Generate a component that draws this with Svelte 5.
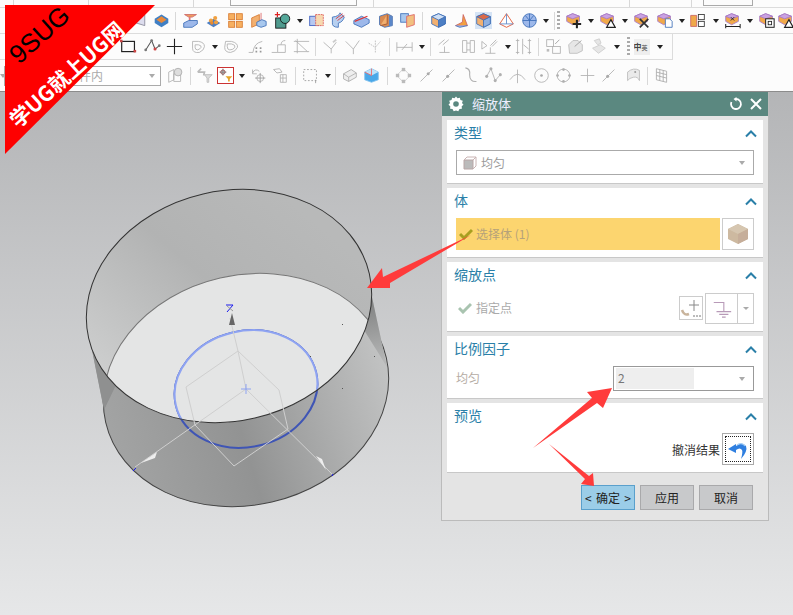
<script>
	// shared icon bodies, drawn on a 20x20 box
	const cube = (top, left, right, line = '#3d6fb8') =>
		`<path d="M10 2 18 5.5V14L10 18 2 14V5.5Z" fill="${left}" stroke="${line}"/><path d="M10 9.5 18 5.5V14L10 18Z" fill="${right}" stroke="${line}"/><path d="M2 5.5 10 2 18 5.5 10 9.5Z" fill="${top}" stroke="${line}"/>`;
	const purple = (extra) =>
		`<path d="M9 2 17 5V11L9 15 2 11V5Z" fill="#f0a94a" stroke="#a678c8"/><path d="M2 5 9 2 17 5 9 8Z" fill="#c9a2e2" stroke="#a678c8"/>${extra}`;
	const gray = 'fill="none" stroke="#b0b0b0"';
	const icons = {
		cone: `<path d="M2 9 15 3V16L2 12Z" fill="#dde" stroke="#889"/>`,
		disc: `<path d="M10 3 18 8V13L10 18 2 13V8Z" fill="#3f7fc4"/><path d="M10 5 16 9 10 13 4 9Z" fill="#e88a3a"/>`,
		tee: `<path d="M3 3H17L12 6H8Z" fill="#f0a060" stroke="#c66"/><path d="M9 6V12" stroke="#d77" stroke-width="2"/><path d="M2 13 8 10H18V14L12 18H2Z" fill="#9db8ea" stroke="#3d6fb8"/>`,
		bumps: `<path d="M2 13 10 8 18 13 10 18Z" fill="#4d7fc4"/><circle cx="7" cy="10" r="2.4" fill="#f0a040"/><circle cx="12" cy="7" r="2.4" fill="#f0a040"/><circle cx="13" cy="12" r="2.4" fill="#f0a040"/><circle cx="8" cy="13" r="2" fill="#e88a30"/>`,
		cubes: `<rect x="2" y="2" width="7" height="7" fill="#f7b060" stroke="#d87a30"/><rect x="11" y="2" width="7" height="7" fill="#f7b060" stroke="#d87a30"/><rect x="2" y="11" width="7" height="7" fill="#f7b060" stroke="#d87a30"/><rect x="11" y="11" width="7" height="7" fill="#f7b060" stroke="#d87a30"/>`,
		cross: `<path d="M2 7 11 3V14L2 18Z" fill="#f2b070" stroke="#d87a30"/><path d="M13 1V12" stroke="#d66"/><path d="M8 12 14 9 19 11V16L13 18 8 16Z" fill="#a8c8ee" stroke="#3d6fb8"/>`,
		teal: `<rect x="2" y="7" width="12" height="12" fill="#4f9a8e" stroke="#111"/><circle cx="13" cy="8" r="5.5" fill="#54a89a" stroke="#111"/><path d="M1 3H7M4 0V6" stroke="#d22" stroke-width="1.4"/>`,
		box: `<rect x="2" y="5" width="11" height="11" fill="#b7c8f0" stroke="#3d5fc0"/><rect x="9" y="3" width="9" height="13" fill="#f7d9b0" stroke="#d55" stroke-dasharray="2 1"/>`,
		curve: `<path d="M4 6Q12 5 13 1L18 6Q16 12 11 13L11 18Q3 18 4 12Z" fill="#b7d0f0" stroke="#3d6fb8"/><path d="M8 8 16 2M10 10 18 4" stroke="#d33"/>`,
		wedge: `<path d="M1 10 10 5 19 9V13L10 18 1 14Z" fill="#9db8ea" stroke="#3d6fb8"/><path d="M2 11 17 5" stroke="#d33" stroke-width="1.4"/>`,
		brown: `<path d="M3 5 12 2 18 5V16L9 18 3 15Z" fill="#d98a50" stroke="#3d6fb8"/><path d="M12 3V14L4 16" stroke="#a0522d" fill="#f2b070"/><path d="M14 4 18 5V16L14 17Z" fill="#5b87c9"/>`,
		split: `<rect x="2" y="2" width="9" height="10" fill="#a8c8ee" stroke="#3d6fb8"/><path d="M9 5 18 3V15L9 18Z" fill="#f2c080" stroke="#d66"/>`,
		bluebox: cube('#cfe0f6', '#f2b070', '#4d7fc4'),
		tri: `<path d="M12 3 17 16H3L11 12Z" fill="#f2a040" stroke="#c66"/><path d="M3 16 8 18 17 16" stroke="#3d6fb8" fill="#9db8ea"/>`,
		redbox: `<rect x="0" y="0" width="20" height="20" fill="#d6e4f5"/>` + cube('#d96a4a', '#f2b070', '#8fb0e0'),
		pyr: `<path d="M10 2 18 14 10 18 2 14Z" fill="#fff" stroke="#e0502a"/><path d="M10 2V14L2 14M10 14 18 14" stroke="#5b87c9" fill="none"/>`,
		sphere: `<circle cx="10" cy="10" r="8" fill="#9db8ea" stroke="#3d6fb8"/><path d="M2 10H18M10 2V18M5 4 10 10 15 4" stroke="#3d6fb8" fill="none"/>`,
		pplus: purple(`<path d="M14 9V19M9 14H19" stroke="#222" stroke-width="2.4"/>`),
		ptri: purple(`<path d="M14 9 19 18H9Z" fill="#fff" stroke="#222" stroke-width="1.4"/>`),
		px: purple(`<path d="M8 8 18 18M18 8 8 18" stroke="#333" stroke-width="2"/>`),
		pdoc: purple(`<path d="M11 8H16L19 11V18H11Z" fill="#fff" stroke="#3d6fb8"/>`),
		pseg: `<path d="M2 4H9V17H2Z" fill="#f0a94a" stroke="#c66"/><rect x="11" y="3" width="7" height="6" fill="#fff" stroke="#333"/><rect x="11" y="11" width="7" height="6" fill="#fff" stroke="#333"/>`,
		pdim: purple(`<path d="M2 17H19M2 14V19M19 14V19" stroke="#222" stroke-width="1.2"/><path d="M8 6 12 10M12 6 8 10" stroke="#222"/>`),
		pframe: purple(`<rect x="9" y="8" width="10" height="10" fill="#fff" stroke="#222" stroke-width="1.2"/><rect x="12" y="11" width="4" height="4" fill="none" stroke="#222"/>`),
		rect: `<rect x="2" y="4" width="15" height="12" fill="none" stroke="#222" stroke-width="1.4"/><rect x="0" y="2" width="3" height="3" fill="#c44"/><rect x="16" y="14" width="3" height="3" fill="#c44"/>`,
		poly: `<path d="M2 14 9 3 13 13 18 9" fill="none" stroke="#555" stroke-width="1.2"/><circle cx="2" cy="14" r="1.6" fill="#777"/><circle cx="9" cy="3" r="1.6" fill="#777"/><circle cx="13" cy="13" r="1.8" fill="#c44"/><circle cx="18" cy="9" r="1.6" fill="#777"/>`,
		plus: `<path d="M10 1V19M1 10H19" stroke="#222" stroke-width="1.3"/>`,
		heart: `<path d="M3 4H10Q17 5 17 10 17 14 11 17 3 18 3 12Z M6 8H10Q14 9 13 11 12 13 9 14 6 14 6 11Z" ${gray}/>`,
		heart2: `<path d="M3 4H10Q18 6 17 11 15 16 9 17 2 17 2 11Z M5 7H10Q15 8 14 11 12 14 8 14 5 14 5 10Z" ${gray}/>`,
		fillet: `<path d="M2 17H7Q8 6 18 4" ${gray}/><path d="M10 12H12M15 12H17M10 16H12M15 16H17" stroke="#999" stroke-width="2"/>`,
		offset: `<path d="M2 17H9M9 8H18V17H9Z M13 8Q13 3 18 3" ${gray}/>`,
		trim: `<path d="M1 4H19M5 1V18M1 16H19M3 3 17 16" ${gray}/>`,
		dot1: `<path d="M3 5 12 13 18 5M12 13V18" ${gray}/><path d="M14 5 18 2" stroke="#ccc" stroke-width="2"/>`,
		dot2: `<path d="M2 4 11 13 18 3M11 13V19" ${gray}/>`,
		dot3: `<path d="M3 6 11 11 17 4M11 3V18" fill="none" stroke="#bbb" stroke-dasharray="2 1"/>`,
		dim: `<path d="M1 5V16M19 5V16M1 11H19M7 14 13 7" ${gray}/>`,
		dim2: `<path d="M3 8 10 2M8 8 15 2M4 17H16M10 10V17" ${gray}/>`,
		frame: `<path d="M3 3V17H8V3ZM12 3V17H17V3ZM8 6H12M8 14H12" ${gray}/>`,
		ang: `<path d="M1 4 7 9 1 13ZM11 9 18 2M13 10 19 4M11 11V18M5 18H17" ${gray}/>`,
		bars: `<path d="M3 1V19M17 1V19M9 1V19M1 3H5M1 17H5M15 3H19M15 17H19M10 8 16 13" ${gray}/>`,
		grid: `<rect x="2" y="2" width="8" height="8" ${gray}/><rect x="9" y="10" width="9" height="8" ${gray}/><path d="M12 7 17 2" stroke="#999"/><rect x="2" y="13" width="3" height="3" fill="#bbb"/>`,
		tool: `<path d="M2 8 7 3H13L18 8V15L12 18H3Z" fill="#e6e6e6" stroke="#bbb"/><path d="M9 10 17 3" stroke="#999"/>`,
		tool2: `<path d="M5 3 11 1 13 6 9 8ZM3 12 12 8 18 12 10 18Z" fill="#e6e6e6" stroke="#ccc"/>`,
		spheres: `<path d="M2 6 8 3V15L2 18ZM8 8H16V17H8Z" ${gray}/><circle cx="13" cy="6" r="4.5" fill="#ddd" stroke="#aaa"/>`,
		funnel: `<path d="M2 6 6 2M2 6H10L9 10" fill="none" stroke="#bbb" stroke-width="2"/><path d="M10 9H19L15 13V18H13V13Z" fill="#ddd" stroke="#bbb"/>`,
		snap: `<rect x="0" y="0" width="20" height="20" fill="#fff"/><path d="M7 2V10M3 6H11" stroke="#666"/><circle cx="7" cy="6" r="2.5" fill="none" stroke="#844"/><path d="M10 11H18L15 14V17H13V14Z" fill="#e6a52a"/>`,
		rot: `<path d="M3 7Q6 1 11 5" ${gray}/><path d="M3 3V8H8" ${gray}/><circle cx="12" cy="13" r="4" ${gray}/><path d="M12 7V19M6 13H18" stroke="#999"/>`,
		bolts: `<path d="M3 3 10 2 13 6 7 7ZM11 9H18V18H11Z M14 9V18M11 13H18" ${gray}/>`,
		dash: `<rect x="2" y="3" width="15" height="13" fill="none" stroke="#999" stroke-dasharray="2 2"/><path d="M16 15V19" stroke="#999"/>`,
		sheet: `<path d="M3 8 12 3 18 7V12L9 17 3 14Z" fill="#eee" stroke="#aaa"/><path d="M3 8 9 12V17M9 12 18 7" ${gray}/>`,
		solid: `<path d="M2 6 10 2 18 6V15L10 18 2 15Z" fill="#4aa8e8" stroke="#7fc0ee"/><path d="M2 6 10 10 18 6 10 2Z" fill="#bfe2f8"/><path d="M10 2V10L2 6" fill="none" stroke="#e66"/>`,
		pts: `<path d="M10 2 18 10 10 18 2 10Z" fill="none" stroke="#ccc"/><g fill="#bbb"><rect x="8" y="1" width="4" height="4"/><rect x="8" y="15" width="4" height="4"/><rect x="1" y="8" width="4" height="4"/><rect x="15" y="8" width="4" height="4"/></g>`,
		line1: `<path d="M3 17 17 3" stroke="#b0b0b0"/><circle cx="12" cy="8" r="1.8" fill="#aaa"/>`,
		line2: `<path d="M3 17 17 3" stroke="#b0b0b0"/><circle cx="9" cy="11" r="1.8" fill="#aaa"/>`,
		scurve: `<path d="M4 1Q10 2 9 9 9 18 17 17" ${gray} stroke-width="1.3"/>`,
		polyg: `<path d="M2 11 7 2 12 16 18 9" ${gray}/><g fill="#b0b0b0"><circle cx="2" cy="11" r="1.8"/><circle cx="7" cy="2" r="1.8"/><circle cx="12" cy="16" r="1.8"/><circle cx="18" cy="9" r="1.8"/></g>`,
		arc: `<path d="M1 15Q10 2 19 15M10 3V19" ${gray}/>`,
		ring: `<circle cx="10" cy="10" r="8" ${gray}/><circle cx="10" cy="10" r="1.6" fill="#aaa"/>`,
		ring2: `<circle cx="10" cy="10" r="7.5" ${gray}/><g fill="#b0b0b0"><circle cx="10" cy="3" r="1.6"/><circle cx="10" cy="17" r="1.6"/><circle cx="3" cy="10" r="1.6"/><circle cx="17" cy="10" r="1.6"/></g>`,
		thin: `<path d="M10 2V18M2 10H18" stroke="#b0b0b0"/>`,
		patch: `<path d="M3 6Q10 0 17 4V16Q15 11 10 12 5 13 3 16Z" fill="#eaeaea" stroke="#bbb"/><circle cx="12" cy="6" r="1.2" fill="#999"/>`,
		mesh: `<path d="M4 2 16 5V18L4 15ZM8 3V16M12 4V17M4 6 16 9M4 10 16 13" fill="none" stroke="#aaa"/>`
	};

	const I = (x, k) => ({ t: 'i', x, k });
	const A = (x) => ({ t: 'a', x });
	const S = (x) => ({ t: 's', x });
	const G = (x) => ({ t: 'g', x });
	const widths = { i: 17, a: 7, s: 1, g: 3 };

	// place items by centre x: the margin is derived from the previous item's end
	function place(items, start = 0) {
		let end = start;
		return items.map((it) => {
			const w = widths[it.t];
			const gap = it.x - w / 2 - end;
			end = it.x + w / 2;
			return { ...it, gap };
		});
	}

	const row1 = place([
		I(140, 'cone'), I(161, 'disc'), S(175), I(190, 'tee'), I(213, 'bumps'), I(235, 'cubes'), I(258, 'cross'),
		I(282, 'teal'), A(300), I(317, 'box'), I(338, 'curve'), I(362, 'wedge'), I(386, 'brown'), I(408, 'split'),
		S(423), I(439, 'bluebox'), I(462, 'tri'), I(484, 'redbox'), I(507, 'pyr'), I(530, 'sphere'), A(547), S(556),
		G(560), I(575, 'pplus'), A(593), I(610, 'ptri'), A(628), I(645, 'px'), I(668, 'pdoc'), A(686), I(702, 'pseg'),
		A(721), I(738, 'pdim'), A(756), I(773, 'pframe'), I(792, 'ptri')
	]);
	const row2 = place([
		I(128, 'rect'), I(152, 'poly'), I(174, 'plus'), I(198, 'heart'), A(215), I(232, 'heart2'), I(256, 'fillet'),
		I(279, 'offset'), I(302, 'trim'), S(316), I(330, 'dot1'), I(353, 'dot2'), I(375, 'dot3'), S(390), I(405, 'dim'),
		A(423), S(432), I(446, 'dim2'), I(470, 'frame'), I(491, 'ang'), A(510), I(526, 'bars'), S(541), I(556, 'grid'),
		I(578, 'tool'), I(601, 'tool2'), A(620), G(632)
	]);
	const row3 = place([
		I(176, 'spheres'), S(191), I(205, 'funnel'), I(226, 'snap'), A(243), I(260, 'rot'), I(281, 'bolts'), S(297),
		I(312, 'dash'), A(330), S(338), I(352, 'sheet'), I(374, 'solid'), S(390), I(406, 'pts'), I(429, 'line1'),
		I(451, 'line2'), I(473, 'scurve'), I(496, 'polyg'), I(520, 'arc'), I(544, 'ring'), I(566, 'ring2'),
		I(590, 'thin'), I(611, 'line2'), I(636, 'patch'), S(650), I(664, 'mesh')
	], 162);
	const strip = [13, 88, 193, 373, 629, 691];

	const topEllipse = { cx: 229, cy: 306, rx: 144, ry: 115 };
	const botEllipse = { cx: 246, cy: 390, rx: 144, ry: 115 };
	const tilt = -13;
</script>

{#snippet tools(items)}
	{#each items as it}
		{#if it.t === 'i'}
			<svg class="ico" class:active={it.k === 'snap'} style="margin-left:{it.gap}px" viewBox="0 0 20 20">{@html icons[it.k]}</svg>
		{:else if it.t === 'a'}
			<i class="drop" style="margin-left:{it.gap}px"></i>
		{:else if it.t === 's'}
			<i class="sep" style="margin-left:{it.gap}px"></i>
		{:else}
			<i class="grip" style="margin-left:{it.gap}px"></i>
		{/if}
	{/each}
{/snippet}

{#snippet head(title)}
	<header class="sec-head">
		<span>{title}</span>
		<svg class="chev" viewBox="0 0 12 8"><path d="M1 7 6 2 11 7" fill="none" stroke="#2a7fa8" stroke-width="2" /></svg>
	</header>
{/snippet}

<div class="app">
	<div class="toolbar">
		<div class="strip">
			{#each strip as x}
				<i class="tick" style="left:{x}px"></i>
			{/each}
			<i class="strip-box"></i>
			<i class="strip-box second"></i>
		</div>
		<div class="row r1">{@render tools(row1)}</div>
		<div class="row r2">
			{@render tools(row2)}
			<span class="lang">中<small>英</small></span>
			<i class="drop lang-drop"></i>
		</div>
		<div class="row r3">
			<i class="drop gray first"></i>
			<div class="filter"><span>在工作部件内</span><i class="drop gray"></i></div>
			{@render tools(row3)}
		</div>
	</div>

	<div class="viewport">
		<svg class="scene" viewBox="0 92 793 523">
			<defs>
				<linearGradient id="wall" gradientUnits="userSpaceOnUse" x1="95" y1="350" x2="300" y2="200">
					<stop offset="0" stop-color="#cdcece" />
					<stop offset="0.55" stop-color="#b2b3b3" />
					<stop offset="1" stop-color="#b8b9b9" />
				</linearGradient>
				<linearGradient id="outer" gradientUnits="userSpaceOnUse" x1="100" y1="420" x2="390" y2="400">
					<stop offset="0" stop-color="#a3a4a4" />
					<stop offset="0.45" stop-color="#929393" />
					<stop offset="1" stop-color="#c2c3c3" />
				</linearGradient>
				<linearGradient id="strip-r" gradientUnits="userSpaceOnUse" x1="372" y1="300" x2="382" y2="360">
					<stop offset="0" stop-color="#808181" />
					<stop offset="1" stop-color="#b4b5b5" />
				</linearGradient>
				<clipPath id="inTop">
					<ellipse cx={topEllipse.cx} cy={topEllipse.cy} rx={topEllipse.rx} ry={topEllipse.ry} transform="rotate({tilt} {topEllipse.cx} {topEllipse.cy})" />
				</clipPath>
			</defs>

			<path d="M92 350 104 410 387 367 372 297Z" fill="url(#outer)" />
			<ellipse class="bot" cx={botEllipse.cx} cy={botEllipse.cy} rx={botEllipse.rx} ry={botEllipse.ry} transform="rotate({tilt} {botEllipse.cx} {botEllipse.cy})" fill="url(#outer)" stroke="#444" />
			<path d="M92 350 104 410 116 385Z" fill="#8f9090" />
			<path d="M372 297 387 367 364 330Z" fill="url(#strip-r)" />
			<ellipse cx={topEllipse.cx} cy={topEllipse.cy} rx={topEllipse.rx} ry={topEllipse.ry} transform="rotate({tilt} {topEllipse.cx} {topEllipse.cy})" fill="url(#wall)" />

			<g clip-path="url(#inTop)">
				<ellipse cx={botEllipse.cx} cy={botEllipse.cy} rx={botEllipse.rx} ry={botEllipse.ry} transform="rotate({tilt} {botEllipse.cx} {botEllipse.cy})" fill="#e4e5e5" stroke="#777" />
			</g>

			<ellipse cx="246" cy="389" rx="72" ry="58" transform="rotate({tilt} 246 389)" fill="none" stroke="#3f55b5" stroke-width="2" />
			<g clip-path="url(#inTop)">
				<ellipse cx="246" cy="389" rx="72" ry="58" transform="rotate({tilt} 246 389)" fill="#e4e5e5" stroke="#8ea3f2" stroke-width="2" />
			</g>

			<ellipse cx={topEllipse.cx} cy={topEllipse.cy} rx={topEllipse.rx} ry={topEllipse.ry} transform="rotate({tilt} {topEllipse.cx} {topEllipse.cy})" fill="none" stroke="#333" />

			<g fill="none" stroke="#cfcfcf">
				<path d="M238 351 186 387 195 425 234 466 288 429 279 390 238 351" />
				<path d="M246 389 238 351 230 318M246 389 135 467M246 389 332 474" />
			</g>
			<path d="M241 389H251M246 384V394" stroke="#8ea3f2" />
			<path d="M232 313 229 325 235 325Z" fill="#666" />
			<path d="M141 463 157 452 155 458Z" fill="#eee" />
			<path d="M326 470 316 456 322 459Z" fill="#eee" />
			<path d="M226 305H233L227 312" fill="none" stroke="#1a1aee" />
			<path d="M227 306 233 311" stroke="#999" />
			<path d="M133 471 136 468" stroke="#1a1aee" />
			<path d="M332 476 333 474" stroke="#1a1aee" />
			<g fill="#555">
				<rect x="342" y="324" width="1" height="1" />
				<rect x="374" y="356" width="1" height="1" />
				<rect x="310" y="356" width="1" height="1" />
				<rect x="342" y="388" width="1" height="1" />
			</g>
		</svg>
	</div>

	<section class="dialog">
		<div class="title">
			<svg class="gear" viewBox="0 0 16 16">
				<path d="M8 .5 9.5 2.3 11.8 1.7 12.5 4 14.8 4.8 14 7 15.5 8.7 13.7 10.3 13.9 12.7 11.5 13.1 10.3 15.2 8 14.4 5.7 15.2 4.5 13.1 2.1 12.7 2.3 10.3.5 8.7 2 7 1.2 4.8 3.5 4 4.2 1.7 6.5 2.3Z" fill="#fff" />
				<circle cx="8" cy="8" r="2.8" fill="#5b8880" />
			</svg>
			<span class="title-text">缩放体</span>
			<svg class="t-btn reset" viewBox="0 0 14 14"><path d="M7 2A5 5 0 1 1 2.4 5" fill="none" stroke="#fff" stroke-width="1.8" /><path d="M7.5 0V4.5L4.5 2Z" fill="#fff" /></svg>
			<svg class="t-btn" viewBox="0 0 14 14"><path d="M2 2 12 12M12 2 2 12" stroke="#fff" stroke-width="2" /></svg>
		</div>

		<div class="sec s-type">
			{@render head('类型')}
			<div class="select type-select">
				<svg class="small" viewBox="0 0 14 14"><path d="M1 4H10V13H1Z" fill="#bbb" stroke="#b9a6a6" /><path d="M1 4 4 1H13V10L10 13M10 4 13 1" fill="none" stroke="#c9b4b4" /></svg>
				<span>均匀</span>
				<i class="drop gray push"></i>
			</div>
		</div>

		<div class="sec s-body">
			{@render head('体')}
			<div class="pick">
				<div class="pick-bar">
					<svg class="check" viewBox="0 0 14 12"><path d="M1 6 5 10 13 2" fill="none" stroke="#a8a020" stroke-width="3" /></svg>
					<span>选择体 (1)</span>
				</div>
				<div class="cube-btn">
					<svg viewBox="0 0 22 22"><path d="M11 1 21 6V16L11 21 1 16V6Z" fill="#cdb9a0" /><path d="M1 6 11 11 21 6 11 1Z" fill="#d6c6b0" /><path d="M11 11V21L21 16V6Z" fill="#c6ae9a" /></svg>
				</div>
			</div>
		</div>

		<div class="sec s-point">
			{@render head('缩放点')}
			<div class="point">
				<svg class="check" viewBox="0 0 14 12"><path d="M1 6 5 10 13 2" fill="none" stroke="#a9c4b0" stroke-width="3" /></svg>
				<span class="muted">指定点</span>
				<div class="pt-tools">
					<div class="pt-add">
						<svg viewBox="0 0 22 22"><path d="M14 3V14M9 8H19" stroke="#888" /><path d="M2 13Q4 19 9 17" fill="none" stroke="#c9b49c" stroke-width="2.5" /><path d="M13 19H15M16 19H18M19 19H21" stroke="#777" /></svg>
					</div>
					<div class="pt-split">
						<div class="pt-main">
							<svg viewBox="0 0 24 24"><path d="M3 6H14V16M6 16H22M9 19H19M12 22H16" fill="none" stroke="#b89ab8" stroke-width="1.2" /></svg>
						</div>
						<div class="pt-arrow"><i class="drop gray tiny"></i></div>
					</div>
				</div>
			</div>
		</div>

		<div class="sec s-scale">
			{@render head('比例因子')}
			<div class="scale">
				<span class="muted warm">均匀</span>
				<div class="select scale-select">
					<span class="value">2</span>
					<i class="drop gray push"></i>
				</div>
			</div>
		</div>

		<div class="sec s-preview">
			{@render head('预览')}
			<div class="undo">
				<span>撤消结果</span>
				<div class="undo-btn">
					<svg viewBox="0 0 22 22"><path d="M1 11 9 6V8Q15 3 19 8 21 13 14 21 16 14 15 12 13 9 9 12V15Z" fill="#2f7fe0" /><path d="M10 7Q15 4 18 8" fill="none" stroke="#a8d0f5" stroke-width="1.2" /></svg>
				</div>
			</div>
		</div>

		<div class="actions">
			<button class="ok"><span>&lt;</span>确定<span>&gt;</span></button>
			<button>应用</button>
			<button>取消</button>
		</div>
	</section>

	<svg class="arrows" viewBox="0 0 793 615">
		<path d="M471 235 390 283 390 288 367 288 382 268 383 277Z" fill="#ff3b3b" />
		<path d="M533 448 592 398 587 392 612 388 603 408 597 403Z" fill="#ff3b3b" />
		<path d="M549 444 585 479 581 484 594 486 593 473 589 476Z" fill="#ff3b3b" />
	</svg>

	<svg class="ribbon" viewBox="0 0 150 150">
		<path d="M0 0H150L0 149Z" fill="#fe0000" />
		<text class="r-9" transform="translate(14 60) rotate(-42)">9SUG</text>
		<text class="r-ug" transform="translate(13 124) rotate(-42)">学UG就上UG网</text>
	</svg>
</div>

<style>
	:global(body) {
		margin: 0;
	}

	.app {
		position: relative;
		width: 793px;
		height: 615px;
		overflow: hidden;
		display: flex;
		flex-direction: column;
		font-family: 'Noto Sans CJK SC', 'Liberation Sans', sans-serif;
		background: #fff;
	}

	.toolbar {
		height: 92px;
		flex: none;
		background: #fcfcfc;
		border-bottom: 1px solid #8c8c8c;
		box-sizing: border-box;
	}

	.strip {
		position: relative;
		height: 8px;
		border-bottom: 1px solid #dcdcdc;
		box-sizing: border-box;
	}

	.tick {
		position: absolute;
		top: 0;
		width: 1px;
		height: 7px;
		background: #d8d8d8;
	}

	.strip-box {
		position: absolute;
		left: 230px;
		top: -1px;
		width: 125px;
		height: 5px;
		border: 1px solid #aaa;
	}

	.strip-box.second {
		left: 703px;
		width: 48px;
	}

	.row {
		display: flex;
		align-items: center;
		box-sizing: border-box;
	}

	.r1 {
		height: 26px;
		border-bottom: 1px solid #dcdcdc;
	}

	.r2 {
		height: 26px;
		width: 673px;
		border-bottom: 1px solid #dcdcdc;
		border-right: 1px solid #dcdcdc;
	}

	.r3 {
		height: 31px;
	}

	.ico {
		width: 17px;
		height: 17px;
		flex: none;
	}

	.ico.active {
		outline: 1px solid #c33;
		outline-offset: -1px;
	}

	.drop {
		flex: none;
		width: 0;
		height: 0;
		box-sizing: content-box;
		border: 3.5px solid transparent;
		border-top: 4px solid #222;
		border-bottom: 0;
	}

	.drop.gray {
		border-top-color: #aaa;
	}

	.drop.first {
		margin-right: -2px;
	}

	.drop.tiny {
		border-width: 3px 3px 0;
	}

	.drop.push {
		margin-left: auto;
	}

	.sep {
		flex: none;
		width: 1px;
		height: 18px;
		background: #d8d8d8;
	}

	.grip {
		flex: none;
		width: 3px;
		height: 20px;
		background: repeating-linear-gradient(#aaa 0 2px, transparent 2px 4px);
	}

	.lang {
		margin-left: 4px;
		width: 16px;
		height: 16px;
		background: #eee;
		font-size: 8px;
		line-height: 16px;
		font-weight: 700;
		color: #444;
		white-space: nowrap;
		overflow: hidden;
	}

	.lang small {
		font-size: 6px;
		color: #777;
	}

	.lang-drop {
		margin-left: 7px;
	}

	.filter {
		flex: none;
		display: flex;
		align-items: center;
		justify-content: space-between;
		box-sizing: border-box;
		width: 157px;
		height: 20px;
		padding: 0 5px 0 26px;
		border: 1px solid #aaa;
		background: #fff;
		font-size: 12px;
		color: #aaa;
	}

	.viewport {
		flex: 1;
		position: relative;
		background: linear-gradient(#b4b5b7, #e6e7e8);
	}

	.scene {
		position: absolute;
		inset: 0;
		width: 100%;
		height: 100%;
	}

	.dialog {
		position: absolute;
		left: 441px;
		top: 92px;
		width: 328px;
		height: 429px;
		box-sizing: border-box;
		background: #e4e4e4;
		border: 1px solid #bbb;
		border-top: 0;
		display: flex;
		flex-direction: column;
	}

	.title {
		height: 24px;
		background: #5b8880;
		display: flex;
		align-items: center;
		padding: 0 5px 0 6px;
		color: #fff;
		flex: none;
	}

	.gear {
		width: 16px;
		height: 16px;
	}

	.title-text {
		margin-left: 8px;
		padding-bottom: 2px;
		font-size: 13px;
		color: #eef;
		flex: 1;
	}

	.t-btn {
		width: 14px;
		height: 14px;
		margin-left: 6px;
	}

	.sec {
		flex: none;
		box-sizing: border-box;
		margin: 0 5px 4px;
		background: #fff;
		border-bottom: 1px solid #c8c8c8;
		padding: 0 9px 0 7px;
	}

	.s-type {
		margin-top: 4px;
		height: 64px;
	}

	.s-body {
		height: 70px;
	}

	.s-point {
		height: 70px;
	}

	.s-scale {
		height: 63px;
	}

	.s-preview {
		height: 70px;
		margin-bottom: 0;
	}

	.sec-head {
		height: 26px;
		display: flex;
		align-items: center;
		justify-content: space-between;
		font-size: 14px;
		color: #2a7fa8;
	}

	.sec-head span {
		padding-bottom: 2px;
	}

	.chev {
		width: 12px;
		height: 9px;
		margin-right: -3px;
	}

	.select {
		display: flex;
		align-items: center;
		box-sizing: border-box;
		border: 1px solid #aaa;
		background: #fff;
		padding-right: 8px;
	}

	.type-select {
		height: 25px;
		margin: 4px 0 0 2px;
		padding-left: 6px;
		font-size: 12px;
		color: #999;
		gap: 4px;
	}

	.small {
		width: 14px;
		height: 14px;
	}

	.pick {
		display: flex;
		justify-content: space-between;
		margin: 4px 0 0 2px;
	}

	.pick-bar {
		width: 264px;
		height: 32px;
		background: #fcd56f;
		display: flex;
		align-items: center;
		padding-left: 3px;
		box-sizing: border-box;
		gap: 3px;
		font-size: 12px;
		color: #b5a27a;
	}

	.pick-bar span,
	.muted {
		padding-bottom: 2px;
	}

	.check {
		width: 14px;
		height: 12px;
		flex: none;
	}

	.cube-btn {
		width: 32px;
		height: 32px;
		box-sizing: border-box;
		border: 1px solid #ccc;
		display: flex;
		align-items: center;
		justify-content: center;
	}

	.cube-btn svg {
		width: 22px;
		height: 22px;
	}

	.point {
		display: flex;
		align-items: center;
		gap: 4px;
		margin-top: 4px;
		height: 32px;
		padding-left: 4px;
	}

	.muted {
		font-size: 12px;
		color: #aaa;
	}

	.warm {
		color: #b5aca4;
	}

	.pt-tools {
		margin-left: auto;
		display: flex;
		align-items: center;
		gap: 2px;
	}

	.pt-add {
		width: 24px;
		height: 24px;
		box-sizing: border-box;
		border: 1px solid #ccc;
	}

	.pt-add svg {
		width: 22px;
		height: 22px;
		display: block;
	}

	.pt-split {
		display: flex;
		width: 49px;
		height: 31px;
		box-sizing: border-box;
		border: 1px solid #ccc;
	}

	.pt-main {
		width: 31px;
		border-right: 1px solid #ccc;
		display: flex;
		align-items: center;
		justify-content: center;
	}

	.pt-main svg {
		width: 22px;
		height: 24px;
	}

	.pt-arrow {
		flex: 1;
		display: flex;
		align-items: center;
		justify-content: center;
	}

	.scale {
		display: flex;
		align-items: center;
		justify-content: space-between;
		height: 25px;
		margin-top: 4px;
		padding-left: 2px;
	}

	.scale-select {
		width: 141px;
		height: 25px;
		padding-left: 2px;
		border-color: #999;
	}

	.value {
		width: 78px;
		height: 21px;
		background: #eee;
		font-size: 12px;
		line-height: 19px;
		color: #777;
		padding-left: 2px;
		box-sizing: border-box;
	}

	.undo {
		display: flex;
		align-items: center;
		justify-content: flex-end;
		gap: 2px;
		margin-top: 4px;
		font-size: 12px;
		color: #333;
	}

	.undo-btn {
		width: 32px;
		height: 32px;
		box-sizing: border-box;
		border: 1px solid #aaa;
		display: flex;
		align-items: center;
		justify-content: center;
		position: relative;
	}

	.undo-btn::before {
		content: '';
		position: absolute;
		inset: 2px;
		border: 1px dotted #222;
	}

	.undo-btn svg {
		width: 22px;
		height: 22px;
	}

	.actions {
		display: flex;
		justify-content: flex-end;
		gap: 5px;
		margin-top: 12px;
		padding-right: 15px;
	}

	button {
		width: 54px;
		height: 25px;
		box-sizing: border-box;
		border: 1px solid #a9a9ab;
		background: #c8c9cb;
		font: 12px 'Noto Sans CJK SC', sans-serif;
		color: #222;
		padding: 0;
	}

	button.ok {
		background: #9bcde8;
		border-color: #5aa0cc;
		display: flex;
		align-items: center;
		justify-content: space-between;
		padding: 0 3px;
	}

	.arrows {
		position: absolute;
		inset: 0;
		width: 793px;
		height: 615px;
		pointer-events: none;
	}

	.ribbon {
		position: absolute;
		left: 5px;
		top: 5px;
		width: 150px;
		height: 150px;
		overflow: visible;
	}

	.r-9 {
		font: 26px 'Liberation Sans', sans-serif;
		fill: #000;
	}

	.r-ug {
		font: 700 21px 'Noto Sans CJK SC', sans-serif;
		fill: #fff;
	}
</style>
